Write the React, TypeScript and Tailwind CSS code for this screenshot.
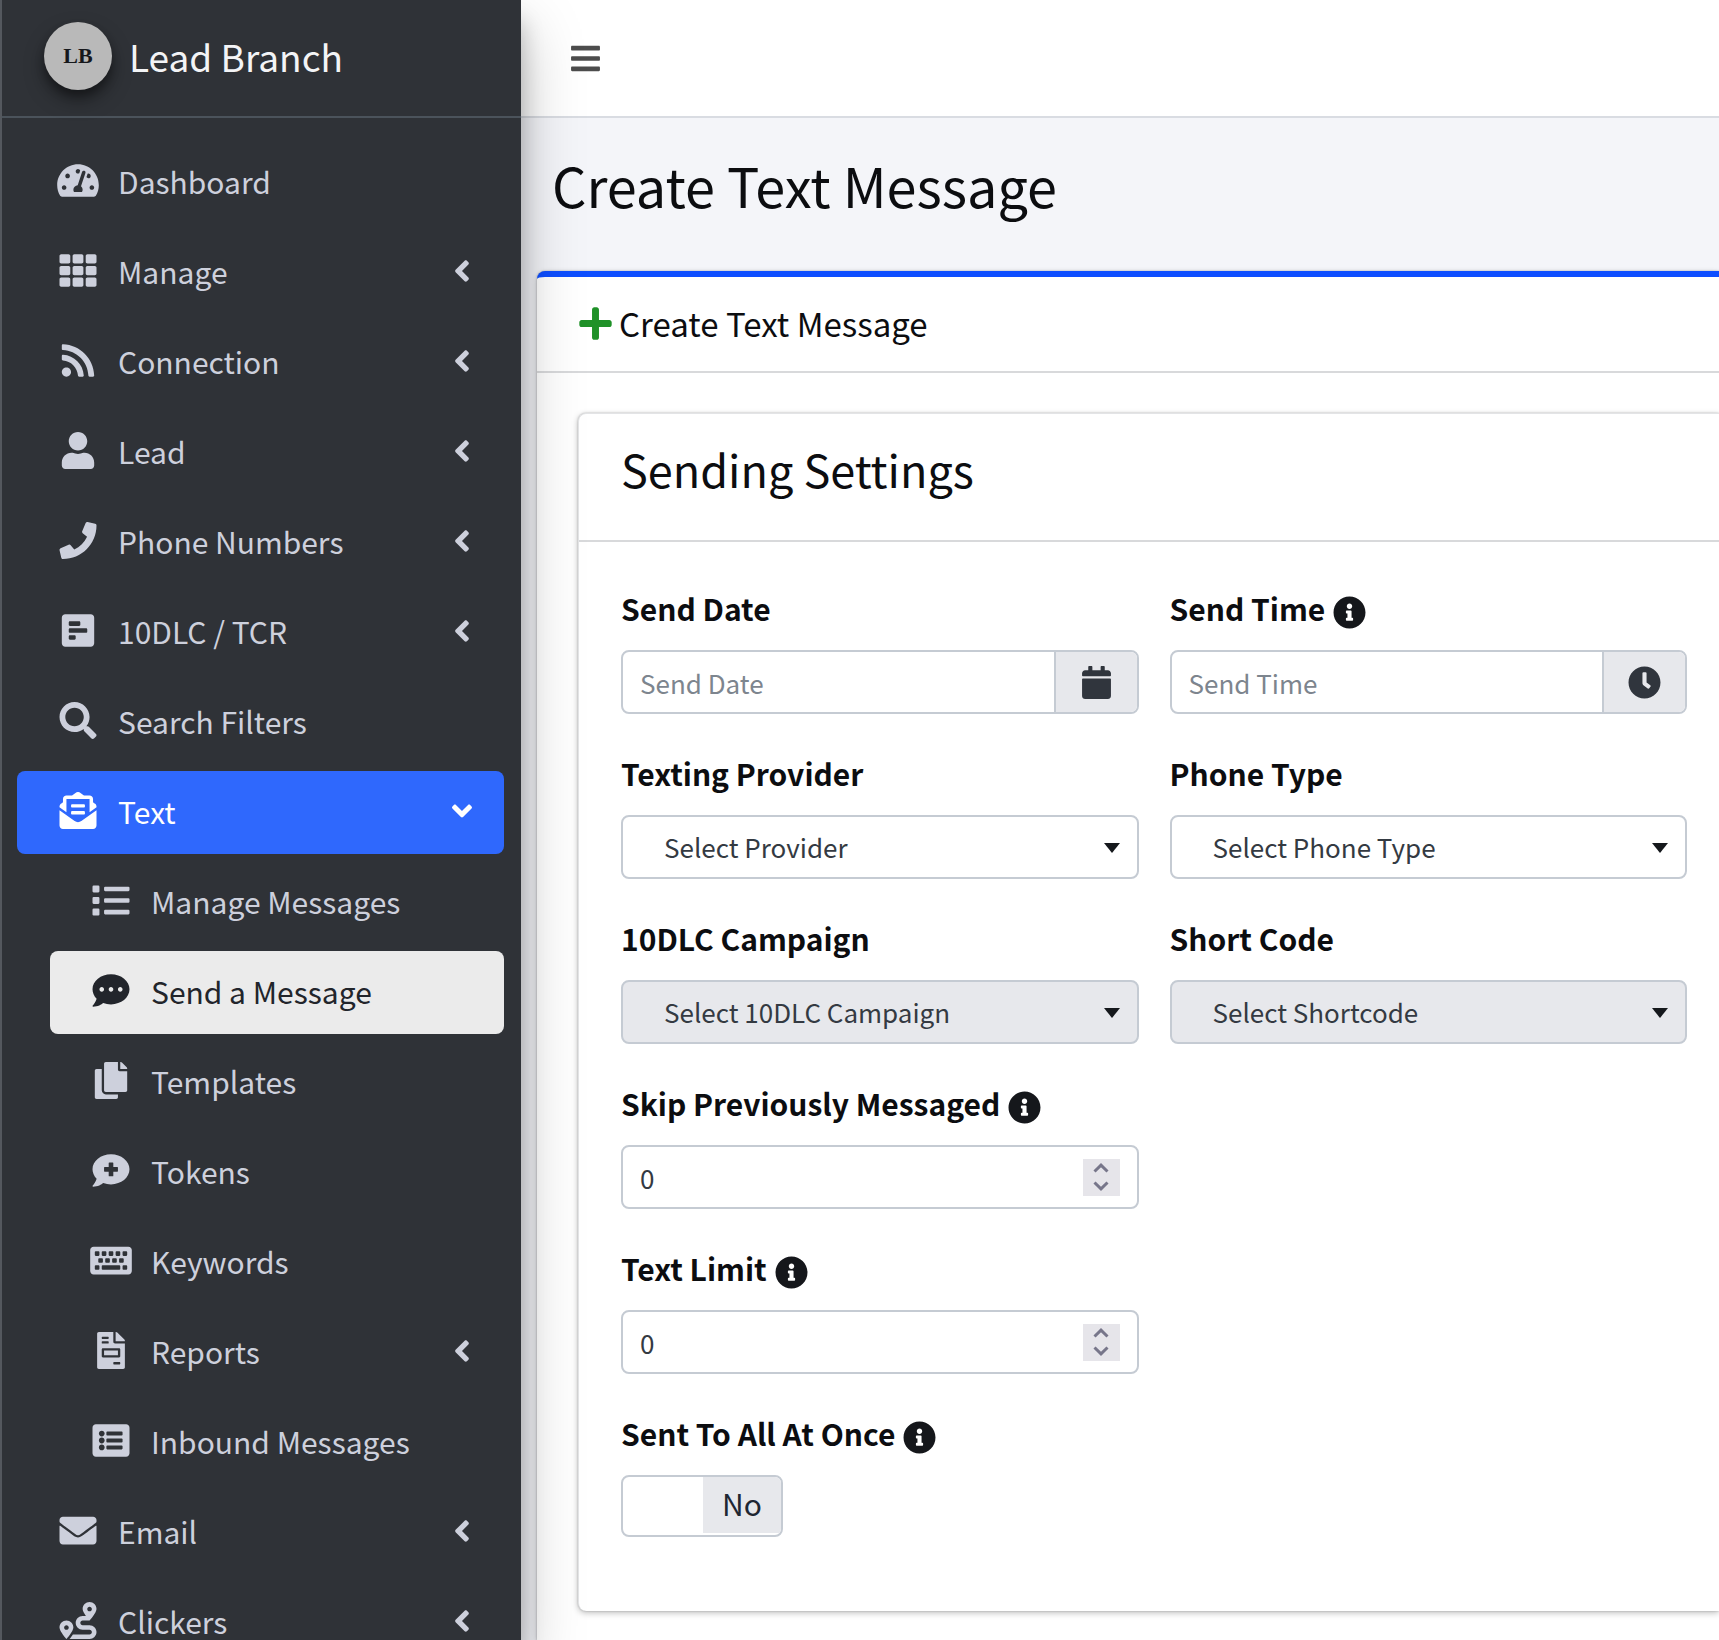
import React, { useState } from "react";
import type { IconType } from "react-icons";
import {
  FaAngleDown,
  FaAngleLeft,
  FaBars,
  FaCalendar,
  FaClock,
  FaCommentDots,
  FaCommentMedical,
  FaCopy,
  FaEnvelope,
  FaEnvelopeOpenText,
  FaFileInvoice,
  FaInfoCircle,
  FaKeyboard,
  FaList,
  FaListAlt,
  FaPhone,
  FaPlus,
  FaPollH,
  FaRoute,
  FaRss,
  FaSearch,
  FaTachometerAlt,
  FaTh,
  FaUser,
} from "react-icons/fa";

type NavEntry = {
  label: string;
  icon: IconType;
  arrow?: "left" | "down";
  nested?: boolean;
  state?: "open" | "current";
};

const navEntries: NavEntry[] = [
  { label: "Dashboard", icon: FaTachometerAlt },
  { label: "Manage", icon: FaTh, arrow: "left" },
  { label: "Connection", icon: FaRss, arrow: "left" },
  { label: "Lead", icon: FaUser, arrow: "left" },
  { label: "Phone Numbers", icon: FaPhone, arrow: "left" },
  { label: "10DLC / TCR", icon: FaPollH, arrow: "left" },
  { label: "Search Filters", icon: FaSearch },
  { label: "Text", icon: FaEnvelopeOpenText, arrow: "down", state: "open" },
  { label: "Manage Messages", icon: FaList, nested: true },
  { label: "Send a Message", icon: FaCommentDots, nested: true, state: "current" },
  { label: "Templates", icon: FaCopy, nested: true },
  { label: "Tokens", icon: FaCommentMedical, nested: true },
  { label: "Keywords", icon: FaKeyboard, nested: true },
  { label: "Reports", icon: FaFileInvoice, nested: true, arrow: "left" },
  { label: "Inbound Messages", icon: FaListAlt, nested: true },
  { label: "Email", icon: FaEnvelope, arrow: "left" },
  { label: "Clickers", icon: FaRoute, arrow: "left" },
];

function NavLink({ entry }: { entry: NavEntry }) {
  const Icon = entry.icon;
  const colors =
    entry.state === "open"
      ? "bg-[#2f68fd] text-white"
      : entry.state === "current"
        ? "bg-[#ebebeb] text-[#22252b]"
        : "text-[#cdd0dc]";

  return (
    <li className={entry.nested ? "pl-[33px]" : ""}>
      <a href="#" className={`flex h-[83px] items-center rounded-lg pr-8 pb-1 pl-10 text-[30px] ${colors}`}>
        <Icon className="h-[37px] w-[42px] shrink-0" />
        <span className="ml-[19px] flex-1 whitespace-nowrap">{entry.label}</span>
        {entry.arrow === "left" && <FaAngleLeft className="h-[34px] w-5" />}
        {entry.arrow === "down" && <FaAngleDown className="h-[34px] w-5" />}
      </a>
    </li>
  );
}

function Sidebar() {
  return (
    <aside className="z-10 flex h-screen w-[521px] shrink-0 flex-col border-l-2 border-[#54585e] bg-[#2f3237] shadow-[0_29px_58px_rgba(0,0,0,0.25),0_21px_21px_rgba(0,0,0,0.22)]">
      <a href="#" className="flex h-[118px] shrink-0 items-center border-b-2 border-[#4b535b] pb-1 pl-[42px]">
        <span className="flex h-[68px] w-[68px] items-center justify-center rounded-full bg-[#b9b9b9] font-['Liberation_Serif',serif] text-[22px] font-bold text-[#16181c] shadow-[0_10px_20px_rgba(0,0,0,0.35),0_6px_8px_rgba(0,0,0,0.3)]">
          LB
        </span>
        <span className="ml-[17px] text-[37px] text-[#f3f4f6]">Lead Branch</span>
      </a>
      <nav className="min-h-0 flex-1 overflow-hidden pt-[23px] pr-[17px] pl-[15px]">
        <ul className="space-y-[7px]">
          {navEntries.map((entry) => (
            <NavLink key={entry.label} entry={entry} />
          ))}
        </ul>
      </nav>
    </aside>
  );
}

type FieldProps = {
  id: string;
  label: string;
  info?: boolean;
  children: React.ReactNode;
};

function Field({ id, label, info, children }: FieldProps) {
  return (
    <div>
      <label htmlFor={id} className="mb-[17px] flex h-[50px] items-center gap-2 text-[30px] font-bold whitespace-nowrap text-[#0c0d10]">
        {label}
        {info && <FaInfoCircle className="mt-2 h-[33px] w-[33px] text-[#15171b]" />}
      </label>
      {children}
    </div>
  );
}

function PickerInput({ id, placeholder, icon: Icon }: { id: string; placeholder: string; icon: IconType }) {
  return (
    <div className="flex h-16 overflow-hidden rounded-lg border-2 border-[#c5cbd3]">
      <input
        id={id}
        type="text"
        placeholder={placeholder}
        className="min-w-0 flex-1 px-[17px] text-[26px] text-[#343a42] outline-none placeholder:text-[#7d858e]"
      />
      <button type="button" aria-label={`Pick ${placeholder}`} className="flex items-center justify-center border-l-2 border-[#c5cbd3] bg-[#e7e8ec] px-6 text-[33px] text-[#30353d]">
        <Icon />
      </button>
    </div>
  );
}

function Select({ id, text, disabled }: { id: string; text: string; disabled?: boolean }) {
  return (
    <div className="relative">
      <select
        id={id}
        disabled={disabled}
        className="block h-16 w-full appearance-none rounded-lg border-2 border-[#c5cbd3] bg-white pr-12 pl-[41px] text-[26px] leading-[40px] text-[#343a42] opacity-100 outline-none disabled:bg-[#e7e8ec]"
      >
        <option>{text}</option>
      </select>
      <svg viewBox="0 0 16 10" className="pointer-events-none absolute top-7 right-[19px] h-[10px] w-4 fill-[#15181c]">
        <path d="M0 0h16L8 10z" />
      </svg>
    </div>
  );
}

function NumberInput({ id }: { id: string }) {
  const [value, setValue] = useState(0);

  return (
    <div className="flex h-16 items-center rounded-lg border-2 border-[#c5cbd3] pr-[17px]">
      <input
        id={id}
        type="number"
        value={value}
        onChange={(e) => setValue(Number(e.target.value))}
        className="min-w-0 flex-1 appearance-none px-[17px] text-[26px] text-[#343a42] outline-none [appearance:textfield] [&::-webkit-inner-spin-button]:appearance-none"
      />
      <div className="flex h-[37px] w-[37px] flex-col bg-[#e6e5ea] text-[#77768a]">
        <button type="button" aria-label="Increase" onClick={() => setValue(value + 1)} className="flex flex-1 items-center justify-center">
          <svg viewBox="0 0 16 10" className="h-[10px] w-4 fill-none stroke-current stroke-3">
            <path d="M1.500 8.500 8 2.200 14.500 8.500" />
          </svg>
        </button>
        <button type="button" aria-label="Decrease" onClick={() => setValue(value - 1)} className="flex flex-1 items-center justify-center">
          <svg viewBox="0 0 16 10" className="h-[10px] w-4 fill-none stroke-current stroke-3">
            <path d="M1.500 1.500 8 7.800 14.500 1.500" />
          </svg>
        </button>
      </div>
    </div>
  );
}

function YesNoSwitch({ id }: { id: string }) {
  const [on, setOn] = useState(false);

  return (
    <label className="flex h-[62px] w-[162px] cursor-pointer overflow-hidden rounded-lg border-2 border-[#c5cbd3] bg-white pb-[2px] text-[30px] text-[#1f2733]">
      <input id={id} type="checkbox" checked={on} onChange={() => setOn(!on)} className="sr-only" />
      {on && <span className="flex w-[78px] items-center justify-center bg-[#2f68fd] text-white">Yes</span>}
      <span className="w-20" />
      {!on && <span className="flex flex-1 items-center justify-center bg-[#e7e8ec] pb-1">No</span>}
    </label>
  );
}

export default function App() {
  return (
    <div className="flex h-screen overflow-hidden bg-[#f4f5f9] font-['Noto_Sans_CJK_JP','Noto_Sans',sans-serif] leading-none text-[#0c0d10]">
      <Sidebar />

      <div className="flex min-w-0 flex-1 flex-col">
        <header className="flex h-[118px] shrink-0 items-center border-b-2 border-[#d9dce2] bg-white pl-12">
          <button type="button" aria-label="Toggle menu" className="text-[33px] text-[#4c4c4c]">
            <FaBars />
          </button>
        </header>

        <main className="flex min-h-0 flex-1 flex-col pl-4">
          <h1 className="flex h-[153px] shrink-0 items-center pb-5 pl-[15px] text-[54px] whitespace-nowrap">
            Create Text Message
          </h1>

          {/* Outer card runs past the right and bottom edges of the window */}
          <section className="min-h-0 flex-1 rounded-tl-lg border-t-6 border-[#0d4eff] bg-white shadow-[0_0_2px_rgba(0,0,0,0.3),0_2px_6px_rgba(0,0,0,0.2)]">
            <h2 className="flex h-[96px] items-center gap-[5px] border-b-2 border-[#d8d9db] pb-px pl-10 text-[33px] whitespace-nowrap">
              <FaPlus className="h-[37px] w-[37px] text-[#1f9128]" />
              Create Text Message
            </h2>

            <div className="pt-10 pl-[41px]">
              <form className="rounded-l-lg border-l border-t border-[#e3e4e6] bg-white shadow-[0_0_2px_rgba(0,0,0,0.25),0_2px_6px_rgba(0,0,0,0.25)]">
                <h3 className="flex h-[128px] items-center border-b-2 border-[#d8d9db] pb-[18px] pl-[42px] text-[45px] whitespace-nowrap">
                  Sending Settings
                </h3>

                <div className="grid grid-cols-2 gap-x-[31px] gap-y-[34px] pt-[41px] pr-8 pb-[74px] pl-[42px]">
                  <Field id="send-date" label="Send Date">
                    <PickerInput id="send-date" placeholder="Send Date" icon={FaCalendar} />
                  </Field>
                  <Field id="send-time" label="Send Time" info>
                    <PickerInput id="send-time" placeholder="Send Time" icon={FaClock} />
                  </Field>
                  <Field id="provider" label="Texting Provider">
                    <Select id="provider" text="Select Provider" />
                  </Field>
                  <Field id="phone-type" label="Phone Type">
                    <Select id="phone-type" text="Select Phone Type" />
                  </Field>
                  <Field id="campaign" label="10DLC Campaign">
                    <Select id="campaign" text="Select 10DLC Campaign" disabled />
                  </Field>
                  <Field id="short-code" label="Short Code">
                    <Select id="short-code" text="Select Shortcode" disabled />
                  </Field>
                  <div className="col-start-1">
                    <Field id="skip-previous" label="Skip Previously Messaged" info>
                      <NumberInput id="skip-previous" />
                    </Field>
                  </div>
                  <div className="col-start-1">
                    <Field id="text-limit" label="Text Limit" info>
                      <NumberInput id="text-limit" />
                    </Field>
                  </div>
                  <div className="col-start-1">
                    <Field id="send-all" label="Sent To All At Once" info>
                      <YesNoSwitch id="send-all" />
                    </Field>
                  </div>
                </div>
              </form>
            </div>
          </section>
        </main>
      </div>
    </div>
  );
}
